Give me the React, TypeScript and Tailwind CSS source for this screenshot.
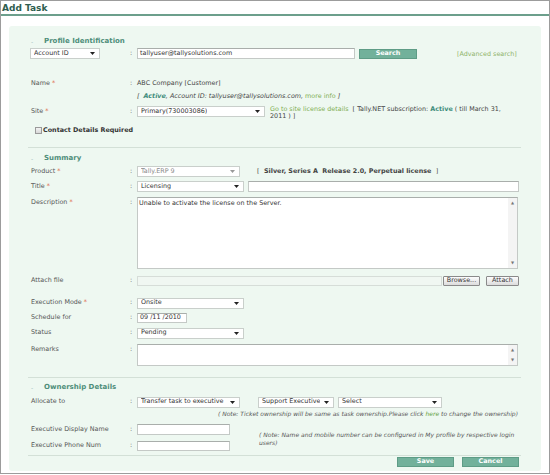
import type { ReactNode } from 'react';

const font = { fontFamily: '"DejaVu Sans", Verdana, sans-serif' };

function Arrow({ light }: { light?: boolean }) {
  return (
    <svg width="5" height="3" viewBox="0 0 5 3" className="shrink-0">
      <path d="M0 0 L5 0 L2.5 3 Z" fill={light ? '#999' : '#222'} />
    </svg>
  );
}

function Select({ w, text, disabled }: { w: string; text: string; disabled?: boolean }) {
  return (
    <div
      className={`${w} flex h-[11px] items-center justify-between gap-[2px] border border-[#c9cfcb] bg-white pl-[3px] pr-[4px] text-[6.4px] ${
        disabled ? 'text-[#888]' : 'text-[#333]'
      }`}
    >
      <span className="truncate">{text}</span>
      <Arrow light={disabled} />
    </div>
  );
}

function Input({ w, value, h = 'h-[11px]' }: { w: string; value?: string; h?: string }) {
  return (
    <div className={`${w} ${h} flex items-center border border-[#c4c9c6] border-t-[#a9aeab] bg-white px-[2px] text-[6.4px] text-[#333]`}>
      {value}
    </div>
  );
}

function Row({
  label,
  required,
  className,
  top,
  children,
}: {
  label: string;
  required?: boolean;
  className: string;
  top?: boolean;
  children: ReactNode;
}) {
  return (
    <div className={`flex pl-[3px] ${top ? 'items-start' : 'items-center'} ${className}`}>
      <div className={`w-[99px] shrink-0 text-[6.4px] text-[#555] ${top ? 'pt-[1px]' : ''}`}>
        {label}
        {required && <span className="text-[#e06a4a]"> *</span>}
      </div>
      <div className={`w-[7px] shrink-0 text-[6.4px] text-[#555] ${top ? 'pt-[1px]' : ''}`}>:</div>
      {children}
    </div>
  );
}

function Heading({ text, className }: { text: string; className: string }) {
  return (
    <div className={`flex h-[9px] items-center pl-[3px] ${className}`}>
      <span className="w-[13px] text-[6px] text-[#9bb]">-</span>
      <span className="text-[7px] font-bold text-[#4e8e7a]">{text}</span>
    </div>
  );
}

function Divider({ className }: { className: string }) {
  return <div className={`h-px bg-[#d3e0d7] ${className}`} />;
}

function TealButton({ text, w }: { text: string; w: string }) {
  return (
    <div
      className={`${w} flex h-[10px] items-center justify-center border border-[#5e9c86] bg-[#72b19b] text-[6.4px] font-bold text-white`}
    >
      {text}
    </div>
  );
}

function GreyButton({ text, w }: { text: string; w: string }) {
  return (
    <div
      className={`${w} flex h-[10px] items-center justify-center rounded-[1px] border border-[#8a8a8a] bg-gradient-to-b from-[#fdfdfd] to-[#dcdcdc] text-[6.4px] text-[#333]`}
    >
      {text}
    </div>
  );
}

function ScrollArea({ h }: { h: string }) {
  return (
    <div className={`flex w-[381px] ${h} border border-[#c4c9c6] border-t-[#a9aeab] bg-white`}>
      <div className="flex-1" />
      <div className="flex w-[9px] flex-col items-center justify-between bg-[#f4f4f4] py-[2px] text-[4px] text-[#777]">
        <span>▲</span>
        <span>▼</span>
      </div>
    </div>
  );
}

export default function App() {
  return (
    <div style={font} className="h-[475px] w-[550px] overflow-hidden bg-white">
      <div className="flex h-[474px] w-[550px] flex-col border border-[#9c9c9c]">
        <div className="h-[15px] border-b-2 border-[#6c9f8c] pl-[1px] pt-[1px] text-[9px] font-bold leading-[12px] text-[#2f5e4f]">
          Add Task
        </div>

        <div className="ml-[8px] mr-[8px] mt-[10px] rounded-[3px] bg-[#eef8f1] pb-[4px] pl-[19px] pr-[20px] pt-[11px]">
          {/* Profile Identification */}
          <Heading text="Profile Identification" className="" />
          <div className="mt-[2px] flex h-[11px] items-center">
            <div className="ml-[2px] w-[100px]">
              <Select w="w-[70px]" text="Account ID" />
            </div>
            <div className="w-[7px] text-[6.4px] text-[#555]">:</div>
            <Input w="w-[218px]" value="tallyuser@tallysolutions.com" />
            <div className="ml-[4px]">
              <TealButton text="Search" w="w-[58px]" />
            </div>
            <div className="ml-[40px] pt-[2px] text-[6.4px] text-[#8fb36a]">[Advanced search]</div>
          </div>

          <Row label="Name" required className="mt-[20px] h-[9px]">
            <span className="text-[6.4px] text-[#444]">ABC Company [Customer]</span>
          </Row>
          <div className="mt-[4px] flex h-[9px] items-center pl-[109px] text-[6.4px] italic text-[#444]">
            <span>[&nbsp;&nbsp;</span>
            <span className="font-bold text-[#3d8c7b]">Active</span>
            <span>, Account ID: tallyuser@tallysolutions.com,&nbsp;</span>
            <span className="not-italic text-[#7fae52]">more info</span>
            <span>&nbsp;]</span>
          </div>

          <Row label="Site" required top className="mt-[5px] h-[17px]">
            <Select w="w-[128px]" text="Primary(730003086)" />
            <div className="ml-[5px] w-[245px] text-[6.4px] leading-[7px] text-[#444]">
              <span className="text-[#7fae52]">Go to site license details</span>
              <span>&nbsp;&nbsp;[ Tally.NET subscription:&nbsp;</span>
              <span className="font-bold text-[#3d8c7b]">Active</span>
              <span>&nbsp;( till March 31,</span>
              <br />
              <span>2011 ) ]</span>
            </div>
          </Row>

          <div className="mt-[3px] flex h-[9px] items-center pl-[7px]">
            <div className="h-[7px] w-[7px] border border-[#9a9a9a] bg-gradient-to-b from-[#f3f3f3] to-[#d8d8d8]" />
            <span className="ml-[1px] text-[6.4px] font-bold text-[#333]">Contact Details Required</span>
          </div>

          <Divider className="mt-[12px]" />

          {/* Summary */}
          <Heading text="Summary" className="mt-[6px]" />
          <Row label="Product" required className="mt-[3px] h-[11px]">
            <Select w="w-[103px]" text="Tally.ERP 9" disabled />
            <span className="ml-[17px] text-[6.4px] font-bold text-[#444]">
              <span className="font-normal">[</span>&nbsp;&nbsp;Silver, Series A&nbsp;&nbsp;Release 2.0, Perpetual license&nbsp;&nbsp;<span className="font-normal">]</span>
            </span>
          </Row>
          <Row label="Title" required className="mt-[4px] h-[11px]">
            <Select w="w-[107px]" text="Licensing" />
            <div className="ml-[4px]">
              <Input w="w-[271px]" />
            </div>
          </Row>
          <Row label="Description" required top className="mt-[5px] h-[72px]">
            <div className="relative">
              <ScrollArea h="h-[72px]" />
              <div className="absolute left-[2px] top-[2px] text-[6.4px] text-[#333]">
                Unable to activate the license on the Server.
              </div>
            </div>
          </Row>
          <Row label="Attach file" className="mt-[7px] h-[10px]">
            <div className="h-[10px] w-[305px] border border-[#d6ddd8] bg-[#f0f7f2]" />
            <div className="ml-[1px]">
              <GreyButton text="Browse..." w="w-[37px]" />
            </div>
            <div className="ml-[6px]">
              <GreyButton text="Attach" w="w-[33px]" />
            </div>
          </Row>

          <Row label="Execution Mode" required className="mt-[12px] h-[10px]">
            <Select w="w-[107px]" text="Onsite" />
          </Row>
          <Row label="Schedule for" className="mt-[5px] h-[10px]">
            <Input w="w-[50px]" h="h-[10px]" value="09 /11 /2010" />
          </Row>
          <Row label="Status" className="mt-[5px] h-[10px]">
            <Select w="w-[107px]" text="Pending" />
          </Row>
          <Row label="Remarks" top className="mt-[6px] h-[22px]">
            <ScrollArea h="h-[22px]" />
          </Row>

          <Divider className="mt-[11px]" />

          {/* Ownership Details */}
          <Heading text="Ownership Details" className="mt-[5px]" />
          <Row label="Allocate to" className="mt-[5px] h-[10px]">
            <Select w="w-[103px]" text="Transfer task to executive" />
            <div className="ml-[18px]">
              <Select w="w-[76px]" text="Support Executive" />
            </div>
            <div className="ml-[4px]">
              <Select w="w-[104px]" text="Select" />
            </div>
          </Row>
          <div className="mt-[2px] flex h-[8px] items-center justify-end pr-[3px] text-[6px] italic text-[#555]">
            <span>( Note: Ticket ownership will be same as task ownership.Please click&nbsp;</span>
            <span className="text-[#5fa03a]">here</span>
            <span>&nbsp;to change the ownership)</span>
          </div>

          <div className="mt-[7px] flex">
            <div className="flex flex-col">
              <Row label="Executive Display Name" className="h-[11px]">
                <Input w="w-[93px]" />
              </Row>
              <Row label="Executive Phone Num" className="mt-[6px] h-[10px]">
                <Input w="w-[93px]" h="h-[10px]" />
              </Row>
            </div>
            <div className="ml-[29px] mt-[7px] w-[262px] text-[6px] italic leading-[7.5px] text-[#555]">
              ( Note: Name and mobile number can be configured in My profile by respective login
              <br />
              users)
            </div>
          </div>

          <Divider className="mt-[4px]" />

          <div className="mt-[1px] flex h-[10px] justify-end gap-[8px] pr-[2px]">
            <TealButton text="Save" w="w-[57px]" />
            <TealButton text="Cancel" w="w-[57px]" />
          </div>
        </div>
      </div>
    </div>
  );
}
